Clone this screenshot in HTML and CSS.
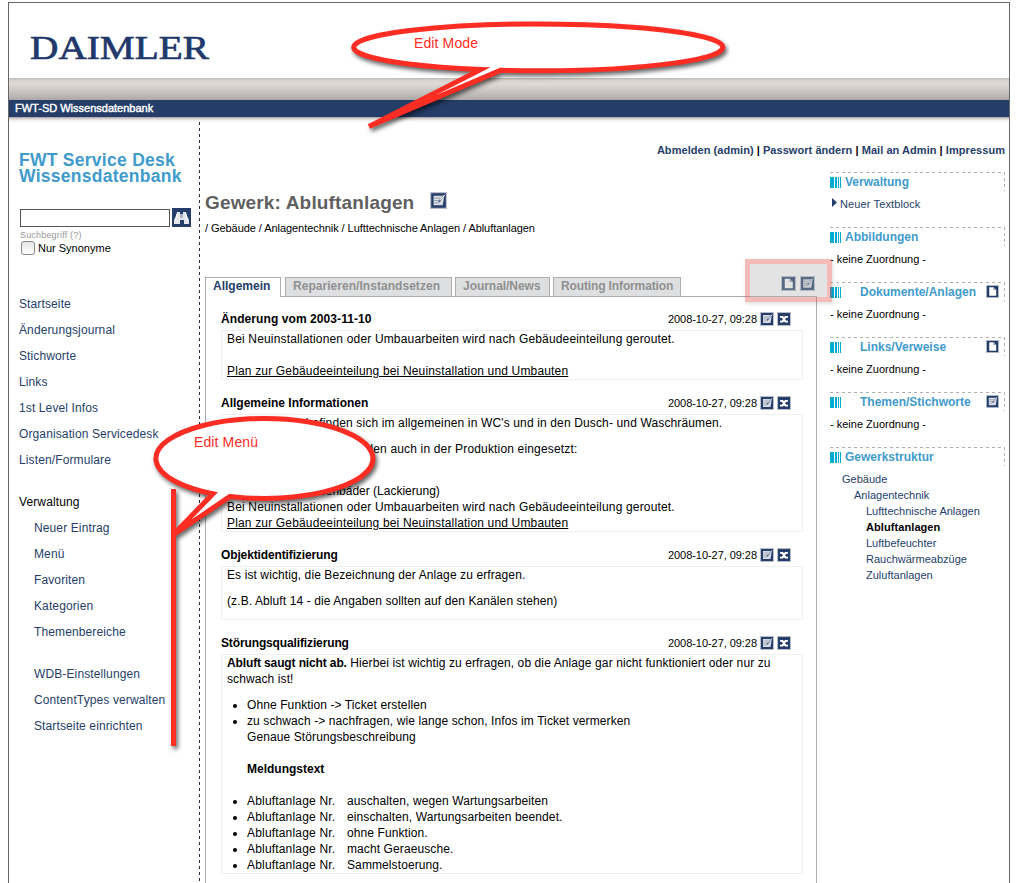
FILE: index.html
```html
<!DOCTYPE html>
<html lang="de">
<head>
<meta charset="utf-8">
<title>FWT-SD Wissensdatenbank</title>
<link rel="stylesheet" href="styles.css">
</head>
<body>
<svg class="defs" aria-hidden="true">
  <symbol id="edit" viewBox="0 0 14 14">
    <rect width="14" height="14" fill="#b9c0cb"/><rect x="1" y="1" width="12" height="12" fill="#253e69"/>
    <path d="M3 3h8.500v2L10.500 11H3z" fill="#d9dde3"/><path d="M3.500 5h5M3.500 7h4M3.500 9h3" stroke="#8794ac" stroke-width=".7"/>
    <path d="M11 3.500L7 8.500" stroke="#5a6c8d" stroke-width="1.400"/><path d="M12 2.500L8.500 6.500" stroke="#f4f5f7" stroke-width=".9"/>
  </symbol>
  <symbol id="del" viewBox="0 0 14 14">
    <rect width="14" height="14" fill="#b9c0cb"/><rect x="1" y="1" width="12" height="12" fill="#253e69"/>
    <path d="M3 4.800h2.500L7 6.200l1.500-1.400H11M3 9.700h2.500L7 8.300l1.500 1.400H11M5 5l4 4.500M9 5L5 9.500" fill="none" stroke="#fff" stroke-width="1.700"/>
  </symbol>
  <symbol id="doc" viewBox="0 0 14 14">
    <rect width="14" height="14" fill="#b9c0cb"/><rect x="1" y="1" width="12" height="12" fill="#253e69"/>
    <path d="M3.500 2.500h4.500L11 5.500V11.500H3.500z" fill="#fff"/><path d="M8 2.500v3h3z" fill="#8f9cb3"/>
  </symbol>
</svg>
<div class="page">
  <header>
    <div class="brand">
      <svg width="190" height="44"><text class="logo" x="0" y="29" textLength="179" lengthAdjust="spacingAndGlyphs">DAIMLER</text></svg>
    </div>
    <div class="band"></div>
    <div class="bar">FWT-SD Wissensdatenbank</div>
    <div class="fade"></div>
  </header>
  <div class="columns">
    <aside class="left">
      <h1>FWT Service Desk<br>Wissensdatenbank</h1>
      <div class="search">
        <span class="field"></span>
        <svg width="19" height="19" viewBox="0 0 19 19"><rect width="19" height="19" fill="#253e69"/><path d="M5 4h3v2h3V4h3l1 4 2 4v4h-5v-4H8v4H2v-4l2-4z" fill="#e4e6ea"/><path d="M8 6h3v4H8z" fill="#aab3c2"/><path d="M8 12h3v4H8z" fill="#253e69"/><path d="M5 6L3.500 12M14 6l1.500 6" stroke="#fff"/></svg>
      </div>
      <div class="hint">Suchbegriff (?)</div>
      <div class="syn"><span class="check"></span><span>Nur Synonyme</span></div>
      <nav>
        <a>Startseite</a><a>Änderungsjournal</a><a>Stichworte</a><a>Links</a><a>1st Level Infos</a><a>Organisation Servicedesk</a><a>Listen/Formulare</a>
        <a class="group">Verwaltung</a>
        <a class="sub">Neuer Eintrag</a><a class="sub">Menü</a><a class="sub">Favoriten</a><a class="sub">Kategorien</a><a class="sub">Themenbereiche</a>
        <a class="sub gap">WDB-Einstellungen</a><a class="sub">ContentTypes verwalten</a><a class="sub">Startseite einrichten</a>
      </nav>
    </aside>
    <div class="divider"></div>
    <div class="content">
      <div class="meta"><a>Abmelden (admin)</a> | <a>Passwort ändern</a> | <a>Mail an Admin</a> | <a>Impressum</a></div>
      <div class="split">
        <main>
          <div class="title"><h2>Gewerk: Abluftanlagen</h2><svg width="17" height="17"><use href="#edit"/></svg></div>
          <div class="crumbs">/ Gebäude / Anlagentechnik / Lufttechnische Anlagen / Abluftanlagen</div>
          <div class="tabs">
            <span class="tab t1 active">Allgemein</span><span class="tab t2">Reparieren/Instandsetzen</span><span class="tab t3">Journal/News</span><span class="tab t4">Routing Information</span>
            <span class="tools"><svg width="15" height="15"><use href="#doc"/></svg><svg width="15" height="15"><use href="#edit"/></svg></span>
          </div>
          <div class="panel">
            <div class="head first"><b class="loose">Änderung vom 2003-11-10</b><span class="date">2008-10-27, 09:28</span><svg width="14" height="14"><use href="#edit"/></svg><svg width="14" height="14"><use href="#del"/></svg></div>
            <div class="box wider">Bei Neuinstallationen oder Umbauarbeiten wird nach Gebäudeeinteilung geroutet.<br><br><u>Plan zur Gebäudeeinteilung bei Neuinstallation und Umbauten</u></div>
            <div class="head"><b>Allgemeine Informationen</b><span class="date">2008-10-27, 09:28</span><svg width="14" height="14"><use href="#edit"/></svg><svg width="14" height="14"><use href="#del"/></svg></div>
            <div class="box wider"><p class="first-line">Abluftanlagen befinden sich im allgemeinen in WC's und in den Dusch- und Waschräumen.</p><p>Solche Abluftanlagen werden auch in der Produktion eingesetzt:</p><p class="low"><span class="bath">Tauchbecken/Farbenbäder (Lackierung)</span><br>Bei Neuinstallationen oder Umbauarbeiten wird nach Gebäudeeinteilung geroutet.<br><u>Plan zur Gebäudeeinteilung bei Neuinstallation und Umbauten</u></p></div>
            <div class="head"><b class="tight">Objektidentifizierung</b><span class="date">2008-10-27, 09:28</span><svg width="14" height="14"><use href="#edit"/></svg><svg width="14" height="14"><use href="#del"/></svg></div>
            <div class="box"><p>Es ist wichtig, die Bezeichnung der Anlage zu erfragen.</p><p>(z.B. Abluft 14 - die Angaben sollten auf den Kanälen stehen)</p></div>
            <div class="head"><b class="tight">Störungsqualifizierung</b><span class="date">2008-10-27, 09:28</span><svg width="14" height="14"><use href="#edit"/></svg><svg width="14" height="14"><use href="#del"/></svg></div>
            <div class="box"><p><b class="tight">Abluft saugt nicht ab.</b> Hierbei ist wichtig zu erfragen, ob die Anlage gar nicht funktioniert oder nur zu<br>schwach ist!</p>
              <ul>
                <li>Ohne Funktion -&gt; Ticket erstellen</li>
                <li>zu schwach -&gt; nachfragen, wie lange schon, Infos im Ticket vermerken<br>Genaue Störungsbeschreibung<br><br><b class="plain">Meldungstext</b><br><br></li>
                <li><span class="nr">Abluftanlage Nr.</span>auschalten, wegen Wartungsarbeiten</li>
                <li><span class="nr">Abluftanlage Nr.</span>einschalten, Wartungsarbeiten beendet.</li>
                <li><span class="nr">Abluftanlage Nr.</span>ohne Funktion.</li>
                <li><span class="nr">Abluftanlage Nr.</span>macht Geraeusche.</li>
                <li><span class="nr">Abluftanlage Nr.</span>Sammelstoerung.</li>
              </ul></div>
          </div>
        </main>
        <aside class="right">
          <section><h3>Verwaltung</h3><div class="entry"><i class="arrow"></i>Neuer Textblock</div></section>
          <section><h3>Abbildungen</h3><div class="none">- keine Zuordnung -</div></section>
          <section><h3 class="wide">Dokumente/Anlagen<svg width="13" height="13"><use href="#doc"/></svg></h3><div class="none">- keine Zuordnung -</div></section>
          <section><h3 class="wide">Links/Verweise<svg width="13" height="13"><use href="#doc"/></svg></h3><div class="none">- keine Zuordnung -</div></section>
          <section><h3 class="wide">Themen/Stichworte<svg width="13" height="13"><use href="#edit"/></svg></h3><div class="none">- keine Zuordnung -</div></section>
          <section><h3>Gewerkstruktur</h3>
            <div class="tree"><div>Gebäude</div><div class="d1">Anlagentechnik</div><div class="d2">Lufttechnische Anlagen</div><div class="d2 on">Abluftanlagen</div><div class="d2">Luftbefeuchter</div><div class="d2">Rauchwärmeabzüge</div><div class="d2">Zuluftanlagen</div></div>
          </section>
        </aside>
      </div>
    </div>
  </div>
</div>
<div class="highlight"></div>
<svg class="notes" width="1034" height="883">
  <g class="shape">
    <path d="M173.500 489V746" fill="none"/>
    <path d="M501 70.130A184.500 23.300 0 1 0 481 69.460L369 126.500Z"/>
    <path d="M230 496.420A108.500 40 0 1 0 213 493.710L173 535Z"/>
  </g>
  <text x="414" y="48" textLength="64">Edit Mode</text>
  <text x="194" y="447" textLength="64">Edit Menü</text>
</svg>
</body>
</html>
```
FILE: styles.css
```css
* { box-sizing: border-box; }
body { margin: 0; padding-top: 2px; height: 883px; overflow: hidden; position: relative; background: #fff; font: 12px/16px "Liberation Sans", Arial, sans-serif; color: #000; }
.defs { position: absolute; width: 0; height: 0; }
svg { display: block; flex: none; }
h1, h2, h3, p, ul { margin: 0; padding: 0; }
.page { margin: 0 0 0 8px; width: 1002px; height: 883px; border: 1px solid #666; border-bottom: 0; overflow: hidden; display: flex; flex-direction: column; }
.brand { height: 75px; padding: 27px 0 0 21px; }
.brand svg { overflow: visible; }
.logo { font: 34.500px "Liberation Serif", serif; fill: #22386a; stroke: #22386a; stroke-width: .7; }
.band { height: 22px; background: linear-gradient(#c5bfbb 0, #c5bfbb 1px, #d8d2ce 2px, #e0dad6 6px, #cac5c2 13px, #b3b0ae 20px, #aaa7a5 22px); }
.bar { height: 17px; background: #253e69; color: #fff; font-size: 11px; line-height: 17px; padding-left: 6px; -webkit-text-stroke: .4px #fff; }
.fade { height: 5px; background: linear-gradient(#a39c9f, #d4cccb 30%, #edf0ec 65%, #fafbfa); }
.columns { display: flex; flex: 1; min-height: 0; }
.left { width: 190px; padding: 30px 0 0 10px; flex: none; white-space: nowrap; }
.divider { width: 1px; background: repeating-linear-gradient(#222c40 0 3px, transparent 3px 6px); }
h1 { font-size: 17.500px; line-height: 16px; color: #409bcc; letter-spacing: .27px; }
.search { display: flex; gap: 2px; margin-top: 24px; padding-left: 1px; }
.field { width: 150px; height: 18px; margin-top: 1px; border: 1px solid #555; }
.hint { font-size: 9px; line-height: 12px; color: #999; letter-spacing: .18px; margin: 2px 0 0 1px; }
.syn { display: flex; align-items: center; height: 15px; margin-top: -1px; padding-left: 2px; font-size: 11px; gap: 3px; }
.check { width: 14px; height: 14px; border: 1px solid #888; border-radius: 3px; background: linear-gradient(#e5e5e5, #fff); }
nav { margin-top: 36px; letter-spacing: .12px; }
nav a { display: block; height: 26px; line-height: 26px; color: #253e69; }
nav .group { margin-top: 16px; color: #000; }
nav .sub { padding-left: 15px; }
nav .gap { margin-top: 16px; }
.content { flex: 1; padding: 20px 4px 0 5px; min-width: 0; }
.meta { text-align: right; font-size: 11px; font-weight: bold; letter-spacing: .05px; white-space: nowrap; }
.meta a { color: #253e69; }
.split { display: flex; gap: 13px; }
main { width: 612px; flex: none; padding-top: 34px; white-space: nowrap; }
.title { display: flex; align-items: flex-start; gap: 15px; height: 26px; }
h2 { width: 210px; font-size: 19px; letter-spacing: .15px; line-height: 22px; color: #5f5f5f; }
.crumbs { font-size: 11px; line-height: 20px; letter-spacing: -.06px; }
.tabs { display: flex; gap: 4px; height: 20px; margin-top: 39px; border-bottom: 1px solid #adadad; }
.tab { height: 19px; border: 1px solid #adadad; border-bottom: 0; background: #dedfe0; color: #909090; font-weight: bold; line-height: 17px; padding-left: 7px; }
.active { height: 20px; background: #fff; color: #253e69; }
.t1 { width: 76px; }
.t2 { width: 167px; letter-spacing: .04px; }
.t3 { width: 95px; margin-left: -1px; letter-spacing: -.04px; }
.t4 { width: 128px; margin-left: -1px; letter-spacing: -.13px; }
.tools { margin: -1px 2px 0 auto; display: flex; gap: 4px; }
.panel { border: 1px solid #adadad; border-top: 0; height: 600px; padding: 0 13px 0 15px; }
.head { display: flex; height: 34px; padding: 0 12px 3px 0; align-items: flex-end; }
.first { height: 33px; }
.head b { margin-right: auto; }
.head .loose { letter-spacing: .08px; }
.tight { letter-spacing: -.13px; }
.plain { letter-spacing: 0; }
.head .date { font-size: 11px; letter-spacing: -.05px; margin-right: 3px; }
.head svg { margin-bottom: 1px; }
.head svg + svg { margin-left: 3px; }
.box { width: 582px; border: 1px solid #f0f0ee; padding-left: 5px; letter-spacing: .1px; }
.wider { letter-spacing: .165px; }
.first-line { letter-spacing: .14px; }
.box p { margin-bottom: 10px; }
.box .low { padding-top: 16px; margin: 0; }
.bath { letter-spacing: 0; }
ul { padding-left: 20px; }
.nr { display: inline-block; width: 100px; letter-spacing: .18px; }
.right { width: 175px; padding-top: 14px; white-space: nowrap; font-size: 11px; }
section { height: 55px; }
h3 { height: 19px; padding: 2px 0 0 15px; display: flex; align-items: center; font-size: 12px; line-height: 17px; color: #409bcc;
  background:
    linear-gradient(#00abd4 0 0) 0 5px / 4px 11px no-repeat,
    linear-gradient(#00abd4 0 0) 5px 5px / 2px 11px no-repeat,
    linear-gradient(#00abd4 0 0) 8px 5px / 1px 11px no-repeat,
    linear-gradient(#00abd4 0 0) 10px 5px / 1px 11px no-repeat,
    repeating-linear-gradient(90deg, #b0b0b0 0 3px, transparent 3px 6px) 0 0 / 100% 1px no-repeat,
    repeating-linear-gradient(#b0b0b0 0 3px, transparent 3px 6px) 100% 0 / 1px 100% no-repeat; }
.wide { padding-left: 30px; }
h3 svg { margin: -2px 6px 0 auto; }
.none, .entry, .tree { margin-top: 5px; }
.entry { color: #253e69; display: flex; align-items: center; gap: 4px; padding-left: 2px; letter-spacing: .12px; }
.arrow { width: 5px; height: 9px; margin: -3px -1px 0 0; background: #253e69; clip-path: polygon(0 0, 100% 50%, 0 100%); }
.tree { color: #253e69; padding-left: 12px; }
.d1 { padding-left: 12px; }
.d2 { padding-left: 24px; }
.on { color: #000; font-weight: bold; letter-spacing: .08px; }
.highlight { position: absolute; left: 745px; top: 259px; width: 87px; height: 43px; background: rgba(174,174,174,.35); background-clip: padding-box; border: 5px solid rgba(229,75,70,.38); box-shadow: 1px 2px 4px rgba(0,0,0,.12); }
.notes { position: absolute; left: 0; top: 0; pointer-events: none; }
.shape { fill: #fff; stroke: #fe2d24; stroke-width: 5; filter: drop-shadow(2px 3px 2px rgba(0,0,0,.6)); }
.notes text { font: 14px "Liberation Sans", Arial, sans-serif; fill: #fe2d24; }
```
